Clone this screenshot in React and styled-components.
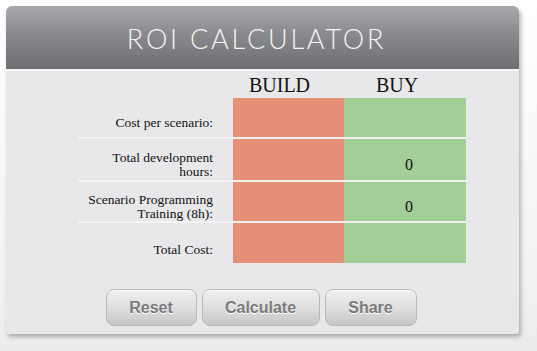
import React from "react";
import styled, { createGlobalStyle } from "styled-components";

const GlobalStyle = createGlobalStyle`
  html, body {
    margin: 0;
    padding: 0;
    background: linear-gradient(to bottom, #ffffff 0%, #f4f4f4 70%, #ececec 100%);
    width: 537px;
    height: 351px;
    overflow: hidden;
  }
`;

const Page = styled.div`
  padding: 6px 0 0 6px;
`;

const Card = styled.div`
  width: 513px;
  height: 328px;
  background: #e8e8ea;
  border-radius: 6px 6px 3px 3px;
  box-shadow: 2px 3px 4px rgba(0, 0, 0, 0.28);
  display: flex;
  flex-direction: column;
  overflow: hidden;
`;

const Header = styled.div`
  height: 63px;
  border-bottom: 2px solid #f6f6f7;
  background: linear-gradient(to bottom, #a9a9ad 0%, #8a8a8e 45%, #6d6e72 100%);
  display: flex;
  align-items: center;
  justify-content: center;
`;

const Title = styled.h1`
  margin: 2px 12px 0 0;
  font-family: "Lato", "Open Sans", sans-serif;
  font-weight: 300;
  font-size: 27px;
  letter-spacing: 2.8px;
  color: #f4f4f4;
`;

const Table = styled.div`
  display: grid;
  grid-template-columns: 155px 111px 122px;
  margin: 4px 0 0 72px;
`;

const ColHead = styled.div`
  font-family: "Liberation Serif", serif;
  font-size: 20px;
  color: #111;
  text-align: center;
  height: 23px;
  line-height: 21px;
  padding-right: ${p => p.$shift}px;
`;

const Label = styled.div`
  font-family: "Liberation Serif", serif;
  font-size: 13.5px;
  line-height: 14px;
  color: #111;
  text-align: right;
  padding-right: 20px;
  height: ${p => p.$h}px;
  display: flex;
  align-items: center;
  justify-content: flex-end;
  padding-top: ${p => p.$pad}px;
  box-sizing: border-box;
  border-bottom: ${p => (p.$last ? "none" : "2px solid #f4f4f4")};
`;

const Cell = styled.div`
  background: ${p => (p.$kind === "build" ? "#e58f77" : "#a3ce98")};
  height: ${p => p.$h}px;
  box-sizing: border-box;
  border-bottom: ${p => (p.$last ? "none" : "2px solid #f0f0ee")};
  display: flex;
  align-items: center;
  justify-content: center;
  padding-top: ${p => p.$pad}px;
  padding-left: ${p => (p.$kind === "buy" ? 8 : 0)}px;
  font-family: "Liberation Serif", serif;
  font-size: 16px;
  color: #111;
`;

const Buttons = styled.div`
  display: flex;
  justify-content: center;
  gap: 5px;
  margin-top: 26px;
  padding-right: 3px;
`;

const Button = styled.button`
  width: ${p => p.$w}px;
  height: 37px;
  border: 1px solid #b9b9bb;
  border-radius: 8px;
  background: linear-gradient(to bottom, #f0f0f0 0%, #dcdcdc 55%, #c6c6c7 100%);
  box-shadow: inset 0 1px 0 rgba(255, 255, 255, 0.8);
  font-family: "Liberation Sans", Arial, sans-serif;
  font-weight: bold;
  font-size: 16px;
  color: #7a7a7c;
  text-shadow: 0 1px 0 #ffffff;
  padding: 0;
`;

const rows = [
  { label: ["Cost per scenario:"], h: 41, pad: 10, buy: "" },
  { label: ["Total development", "hours:"], h: 43, pad: 11, buy: "0" },
  { label: ["Scenario Programming", "Training (8h):"], h: 41, pad: 11, buy: "0" },
  { label: ["Total Cost:"], h: 40, pad: 13, buy: "" }
];

export default function App() {
  return (
    <>
      <GlobalStyle />
      <Page>
        <Card>
          <Header>
            <Title>ROI CALCULATOR</Title>
          </Header>
          <Table>
            <div />
            <ColHead $shift={18}>BUILD</ColHead>
            <ColHead $shift={16}>BUY</ColHead>
            {rows.map((r, i) => {
              const last = i === rows.length - 1;
              return (
                <React.Fragment key={i}>
                  <Label $h={r.h} $pad={r.pad} $last={last}>
                    <span>
                      {r.label.map((l, j) => (
                        <div key={j}>{l}</div>
                      ))}
                    </span>
                  </Label>
                  <Cell $kind="build" $h={r.h} $last={last} $pad={0} />
                  <Cell $kind="buy" $h={r.h} $last={last} $pad={r.pad}>
                    {r.buy}
                  </Cell>
                </React.Fragment>
              );
            })}
          </Table>
          <Buttons>
            <Button $w={91}>Reset</Button>
            <Button $w={118}>Calculate</Button>
            <Button $w={92}>Share</Button>
          </Buttons>
        </Card>
      </Page>
    </>
  );
}
